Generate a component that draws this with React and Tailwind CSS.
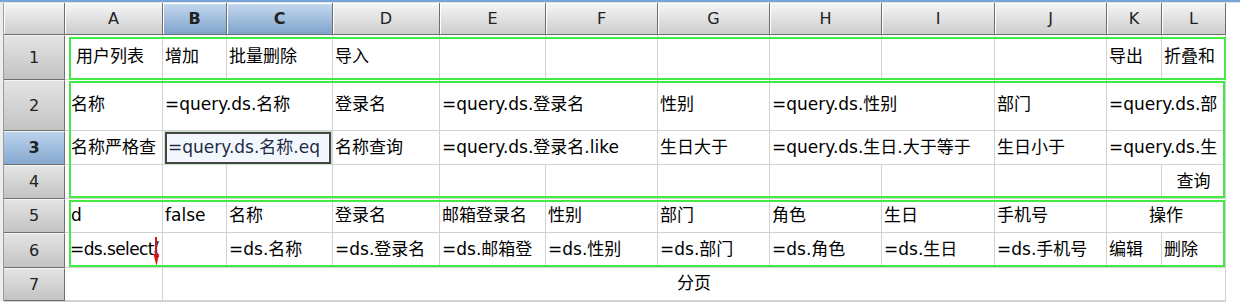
import React from "react";

const COLS =
  "grid-cols-[61px_98px_64px_106px_107px_106px_112px_112px_112px_113px_112px_55px_64px]";
const ROWS = "grid-rows-[32px_45px_51px_34px_34px_34px_35px_33px]";

const letters = ["A", "B", "C", "D", "E", "F", "G", "H", "I", "J", "K", "L"];
const selectedCols = ["B", "C"];

const data = [
  [
    { t: "用户列表", pl: "pl-[11px]" },
    { t: "增加" },
    { t: "批量删除" },
    { t: "导入" },
    {},
    {},
    {},
    {},
    {},
    {},
    { t: "导出" },
    { t: "折叠和" },
  ],
  [
    { t: "名称" },
    { t: "=query.ds.名称", span: "col-span-2" },
    { t: "登录名" },
    { t: "=query.ds.登录名", span: "col-span-2" },
    { t: "性别" },
    { t: "=query.ds.性别", span: "col-span-2" },
    { t: "部门" },
    { t: "=query.ds.部", span: "col-span-2" },
  ],
  [
    { t: "名称严格查" },
    { t: "", span: "col-span-2" },
    { t: "名称查询" },
    { t: "=query.ds.登录名.like", span: "col-span-2" },
    { t: "生日大于" },
    { t: "=query.ds.生日.大于等于", span: "col-span-2" },
    { t: "生日小于" },
    { t: "=query.ds.生", span: "col-span-2" },
  ],
  [{}, {}, {}, {}, {}, {}, {}, {}, {}, {}, {}, { t: "查询", center: true }],
  [
    { t: "d" },
    { t: "false" },
    { t: "名称" },
    { t: "登录名" },
    { t: "邮箱登录名" },
    { t: "性别" },
    { t: "部门" },
    { t: "角色" },
    { t: "生日" },
    { t: "手机号" },
    { t: "操作", span: "col-span-2", center: true },
  ],
  [
    { t: "=ds.select(", cursor: true, pl: "pl-[5px] tracking-[-0.6px]" },
    {},
    { t: "=ds.名称" },
    { t: "=ds.登录名" },
    { t: "=ds.邮箱登" },
    { t: "=ds.性别" },
    { t: "=ds.部门" },
    { t: "=ds.角色" },
    { t: "=ds.生日" },
    { t: "=ds.手机号" },
    { t: "编辑" },
    { t: "删除" },
  ],
  [{}, { t: "分页", span: "col-span-11", center: true }],
];

function ColHeader({ label, selected }) {
  return (
    <div
      className={
        "flex items-center justify-center border-r border-b border-[#6e6e6e] shadow-[inset_1px_1px_0_#ffffff] text-[16px] text-[#222222] " +
        (selected
          ? "bg-linear-to-b from-[#c6daef] to-[#7fa4cc] font-bold"
          : "bg-linear-to-b from-[#f6f6f6] to-[#cdcdcd]")
      }
    >
      {label}
    </div>
  );
}

function RowHeader({ n, selected }) {
  return (
    <div
      className={
        "flex items-center justify-center border-r border-b border-[#707070] border-t border-t-[#f4f4f4] text-[16px] text-[#222222] " +
        (selected
          ? "bg-linear-to-b from-[#bcd3ec] to-[#84a8cf] font-bold"
          : "bg-linear-to-b from-[#e4e4e4] to-[#c3c3c3]")
      }
    >
      {n}
    </div>
  );
}

function Cell({ c, first }) {
  const pad = c.pl ? c.pl : first ? "pl-[6px]" : "pl-[2px]";
  return (
    <div
      className={
        "relative flex items-center overflow-hidden whitespace-nowrap border-r border-b border-[#d2d2d2] bg-white text-black text-[17px] " +
        (c.span ? c.span + " " : "") +
        (c.center ? "justify-center " : pad)
      }
    >
      {c.t || ""}
      {c.cursor && (
        <svg
          className="absolute left-[88px] top-[4px]"
          width="8"
          height="30"
          viewBox="0 0 8 30"
        >
          <line x1="3" y1="0" x2="3" y2="20" stroke="#e01010" strokeWidth="2" />
          <polygon points="0.5,17 6,17 3.5,29" fill="#e01010" />
          <line x1="1" y1="14" x2="2" y2="16" stroke="#2aa0a0" strokeWidth="1" />
        </svg>
      )}
    </div>
  );
}

export default function App() {
  return (
    <div className="w-[1240px] h-[308px] overflow-hidden bg-white font-['DejaVu_Sans','Noto_Sans_CJK_SC',sans-serif]">
      <div className="h-[2px] bg-[#74a4d9]" />
      <div className="h-[1px] bg-[#e4e4e4]" />
      <div className="flex">
        <div className="w-[4px] h-[298px] bg-[#ededed] border-r border-[#9c9c9c]" />
        <div className="relative">
          <div className={"grid " + COLS + " " + ROWS}>
            <ColHeader label="" />
            {letters.map((l) => (
              <ColHeader key={l} label={l} selected={selectedCols.includes(l)} />
            ))}
            {data.map((row, ri) => (
              <React.Fragment key={ri}>
                <RowHeader n={ri + 1} selected={ri === 2} />
                {row.map((c, ci) => (
                  <Cell key={ci} c={c} first={ci === 0} />
                ))}
              </React.Fragment>
            ))}
          </div>
          <div
            className={
              "absolute inset-0 grid pointer-events-none " + COLS + " " + ROWS
            }
          >
            <div className="col-start-2 col-end-14 row-start-2 row-end-3 ml-[4px] mt-[2px] border-2 border-[#44ea44]" />
            <div className="col-start-2 col-end-14 row-start-3 row-end-6 ml-[4px] mt-[1px] mb-[1px] mr-[1px] border-2 border-[#44ea44]" />
            <div className="col-start-2 col-end-14 row-start-6 row-end-8 ml-[4px] mt-[1px] mb-[1px] mr-[1px] border-2 border-[#44ea44]" />
            <div className="col-start-3 col-end-5 row-start-4 row-end-5 ml-[2px] mr-[2px] mt-[1px] mb-[1px] flex items-center overflow-hidden whitespace-nowrap border-2 border-[#454545] bg-[#f3f8fe] pl-[1px] text-[17px] text-[#1f2a44] shadow-[0_0_0_1px_#c4e6c4]">
              =query.ds.名称.eq
            </div>
          </div>
        </div>
      </div>
      <div className="ml-[4px] w-[1222px] border-t border-[#d0d0d0]" />
    </div>
  );
}
